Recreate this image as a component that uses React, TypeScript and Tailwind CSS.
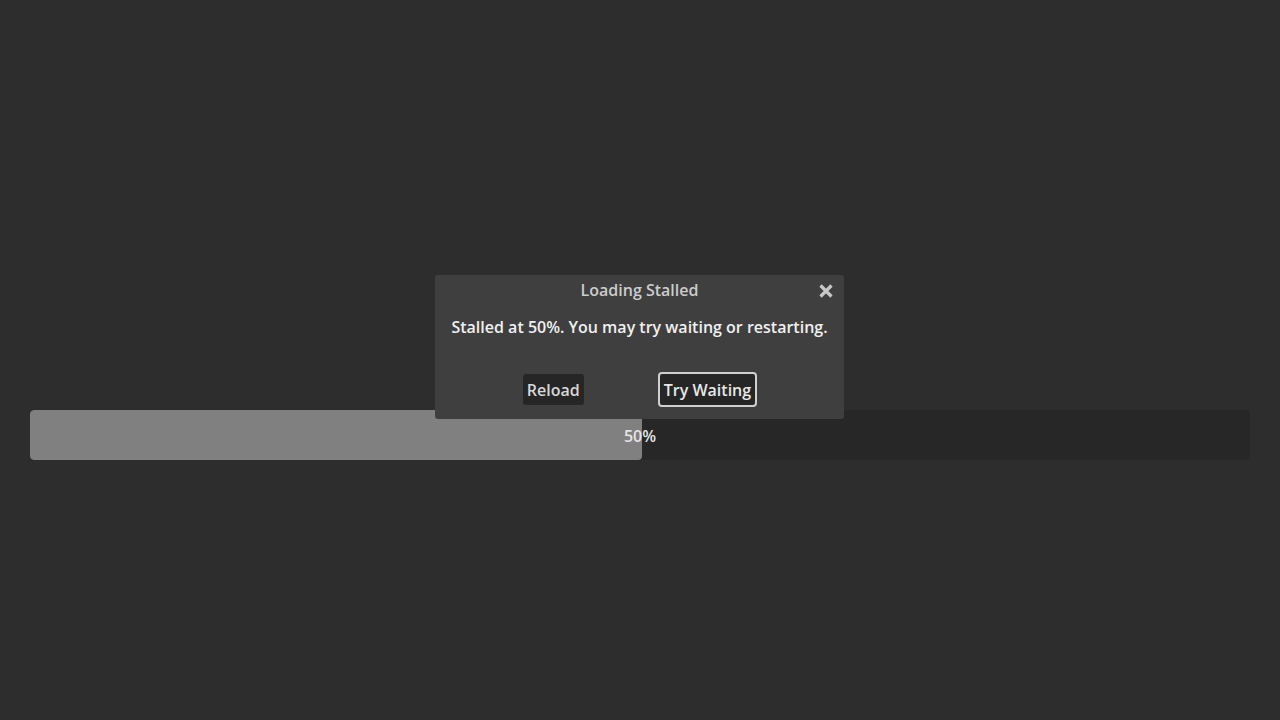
import React from "react";

export default function App() {
  const pct = 50;
  return (
    <div
      className="relative w-full h-screen bg-[#2d2d2d] overflow-hidden"
      style={{ fontFamily: '"Open Sans", "Noto Sans", sans-serif' }}
    >
      <div className="pt-[410px] px-[30px]">
        <div className="relative h-[50px] rounded-[4px] bg-[#272727] overflow-hidden">
          <div className="h-full bg-[#808080] rounded-[4px]" style={{ width: `calc(${pct}% + 2px)` }} />
          <div className="absolute inset-0 pt-[2px] flex items-center justify-center text-[16px] font-semibold text-[#e4e4e4]">
            50%
          </div>
        </div>
      </div>

      <div className="absolute left-[435px] top-[275px] w-[409px] h-[144px] bg-[#3f3f3f] rounded-[3px] flex flex-col items-center pt-[3px]">
        <div className="leading-[24px] text-[16px] font-semibold text-[#cccccc]">Loading Stalled</div>
        <button className="absolute right-[10px] top-[8px] w-[16px] h-[16px] flex items-center justify-center">
          <svg width="16" height="16" viewBox="0 0 16 16">
            <path d="M2.5 2.5 L13.5 13.5 M13.5 2.5 L2.5 13.5" stroke="#c8c8c8" strokeWidth="3.2" strokeLinecap="butt" />
          </svg>
        </button>
        <div className="mt-[13px] leading-[24px] text-[16px] font-semibold text-[#f0f0f0]">
          Stalled at 50%. You may try waiting or restarting.
        </div>
        <div className="mt-[33px] flex items-center gap-[74px] ml-[1px]">
          <button className="h-[31px] px-[4px] pt-[1px] rounded-[3px] bg-[#262626] text-[16px] font-semibold text-[#d8d8d8] leading-[30px]">
            Reload
          </button>
          <button className="h-[35px] px-[4px] pt-[1px] rounded-[4px] border-2 border-[#d0d0d0] bg-[#262626] text-[16px] font-semibold text-[#e8e8e8] leading-[30px]">
            Try Waiting
          </button>
        </div>
      </div>
    </div>
  );
}
